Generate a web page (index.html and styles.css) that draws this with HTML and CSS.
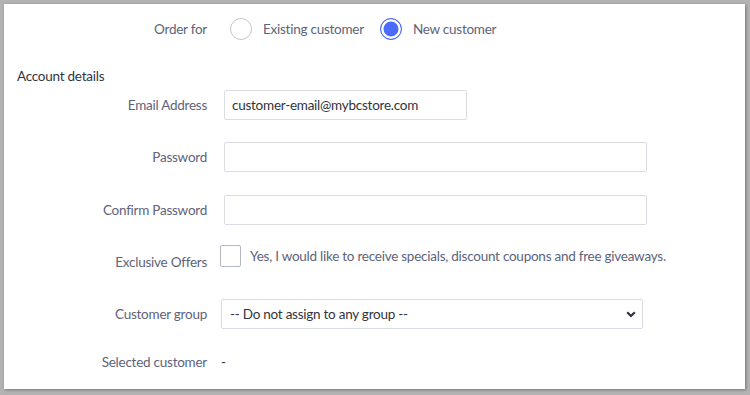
FILE: index.html
```html
<!DOCTYPE html>
<html lang="en">
<head>
<meta charset="utf-8">
<title>New customer</title>
<link rel="stylesheet" href="styles.css">
</head>
<body>
<div class="panel">
  <div class="row row-order">
    <span class="label">Order for</span>
    <div class="radios">
      <label class="radio-opt"><input type="radio" name="orderfor" class="radio"><span>Existing customer</span></label>
      <label class="radio-opt"><input type="radio" name="orderfor" class="radio" checked><span>New customer</span></label>
    </div>
  </div>

  <h3 class="section-title">Account details</h3>

  <div class="row row-email">
    <label class="label" for="email">Email Address</label>
    <input id="email" class="field field-short" type="text" value="customer-email@mybcstore.com">
  </div>

  <div class="row row-pass">
    <label class="label" for="pw">Password</label>
    <input id="pw" class="field field-long" type="password">
  </div>

  <div class="row row-confirm">
    <label class="label" for="pw2">Confirm Password</label>
    <input id="pw2" class="field field-long" type="password">
  </div>

  <div class="row row-offers">
    <span class="label label-offers">Exclusive Offers</span>
    <label class="check-opt"><input type="checkbox" class="checkbox"><span>Yes, I would like to receive specials, discount coupons and free giveaways.</span></label>
  </div>

  <div class="row row-group">
    <label class="label" for="grp">Customer group</label>
    <div class="select-wrap">
      <select id="grp" class="select"><option>-- Do not assign to any group --</option></select>
      <svg class="chevron" width="10" height="7" viewBox="0 0 10 7"><path d="M1.2 1.2 L5 5 L8.8 1.2" fill="none" stroke="#313440" stroke-width="2.2"/></svg>
    </div>
  </div>

  <div class="row row-selected">
    <span class="label">Selected customer</span>
    <span class="value">-</span>
  </div>
</div>
</body>
</html>
```

FILE: styles.css
```css
* { box-sizing: border-box; }

html, body {
  margin: 0;
  padding: 0;
}

body {
  background: #b3b3b3;
  width: 750px;
  height: 395px;
  overflow: hidden;
  font-family: Lato, "Open Sans", "Liberation Sans", sans-serif;
  font-size: 13.5px;
  letter-spacing: -0.25px;
  line-height: 20px;
  color: #313440;
}

.panel {
  margin: 4px 5px 6px 4px;
  height: 385px;
  background: #ffffff;
  box-shadow: 1px 1px 3px rgba(0, 0, 0, 0.35);
  padding-top: 14px;
}

.row {
  display: grid;
  grid-template-columns: 203px 1fr;
  column-gap: 17px;
  align-items: center;
}

.label {
  text-align: right;
  color: #5e637a;
}

.radios {
  display: flex;
  align-items: center;
  margin-left: 6px;
}

.radio-opt {
  display: flex;
  align-items: center;
  gap: 11px;
  color: #5e637a;
  margin-right: 16px;
}

.radio {
  appearance: none;
  -webkit-appearance: none;
  margin: 0;
  width: 22px;
  height: 22px;
  border-radius: 50%;
  border: 1px solid #c3c6cf;
  background: #fff;
}

.radio:checked {
  border: 1.5px solid #4b6bfb;
  background: #4b6bfb;
  box-shadow: inset 0 0 0 2.5px #fff;
}

.section-title {
  margin: 26px 0 0 13px;
  font-size: 13.5px;
  font-weight: normal;
  line-height: 20px;
  color: #313440;
}

.field {
  height: 30px;
  border: 1px solid #d9dce3;
  border-radius: 2px;
  padding: 0 7px;
  font: inherit;
  letter-spacing: inherit;
  color: #313440;
  background: #fff;
  outline: none;
}

.field-short { width: 243px; }
.field-long { width: 423px; }

.row-email { margin-top: 4px; }
.row-pass { margin-top: 22px; }
.row-confirm { margin-top: 23px; }

.row-offers {
  margin-top: 20px;
  align-items: start;
}

.label-offers { padding-top: 7px; }

.check-opt {
  display: flex;
  align-items: center;
  gap: 9px;
  margin-left: -4px;
  color: #5e637a;
}

.checkbox {
  appearance: none;
  -webkit-appearance: none;
  margin: 0;
  width: 21px;
  height: 22px;
  border: 1px solid #b4b8c3;
  border-radius: 2px;
  background: #fff;
  flex: none;
}

.row-group { margin-top: 27px; }

.select-wrap {
  display: flex;
  align-items: center;
  width: 422px;
  height: 30px;
  margin-left: -3px;
  border: 1px solid #d9dce3;
  border-radius: 2px;
  padding-right: 6px;
}

.select {
  appearance: none;
  -webkit-appearance: none;
  flex: 1;
  height: 28px;
  border: none;
  background: transparent;
  font: inherit;
  letter-spacing: inherit;
  color: #313440;
  padding: 0 8px;
  outline: none;
}

.chevron { flex: none; }

.row-selected { margin-top: 23px; }

.value {
  margin-left: -3px;
  color: #313440;
}
```
